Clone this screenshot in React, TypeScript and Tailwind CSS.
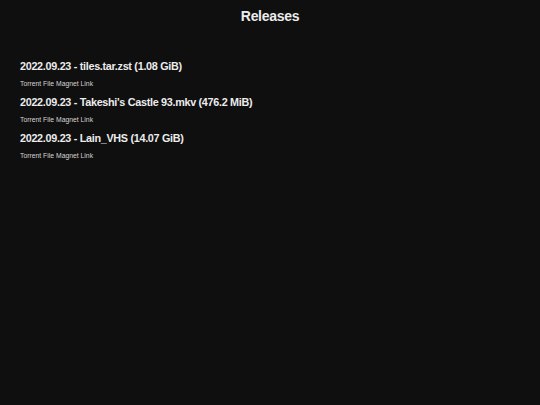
import React from 'react';

const releases = [
  { date: '2022.09.23', name: 'tiles.tar.zst', size: '1.08 GiB' },
  { date: '2022.09.23', name: "Takeshi's Castle 93.mkv", size: '476.2 MiB' },
  { date: '2022.09.23', name: 'Lain_VHS', size: '14.07 GiB' },
];

export default function App() {
  return (
    <div className="min-h-[405px] w-full bg-[#0f0f0f] text-[#ececec] font-['Liberation_Sans',Arial,sans-serif]">
      <h1 className="pt-[7px] text-center text-[14px] font-bold leading-[18px] tracking-[-0.3px]">Releases</h1>
      <div className="mt-[34px] px-[20px] flex flex-col">
        {releases.map((r) => (
          <div key={r.name} className="h-[36px]">
            <h2 className="text-[10.8px] font-bold leading-[14px] tracking-[-0.3px]">
              {r.date} - {r.name} ({r.size})
            </h2>
            <div className="mt-[6px] text-[6.8px] leading-[9px] text-[#d4d4d4] flex gap-[2px]">
              <a href="#">Torrent File</a>
              <a href="#">Magnet Link</a>
            </div>
          </div>
        ))}
      </div>
    </div>
  );
}
